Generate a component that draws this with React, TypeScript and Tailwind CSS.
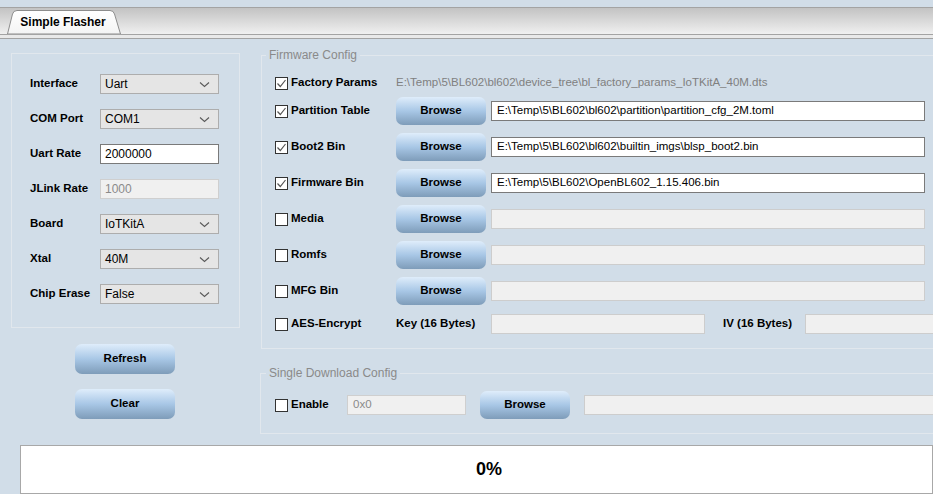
import React from 'react';

const font = { fontFamily: '"Liberation Sans", Arial, sans-serif' };

const Chevron = () => (
  <svg width="11" height="7" viewBox="0 0 11 7" className="shrink-0">
    <path d="M1 1.5l4.5 4 4.5-4" fill="none" stroke="#5a5a5a" strokeWidth="1.1" />
  </svg>
);

const Select: React.FC<{ value: string }> = ({ value }) => (
  <div className="w-[119px] h-[20px] bg-[#e5e5e5] border border-[#adadad] flex items-center justify-between pl-[4px] pr-[8px] text-[12px] text-black">
    <span>{value}</span>
    <Chevron />
  </div>
);

const Check: React.FC<{ checked?: boolean }> = ({ checked }) => (
  <div className="w-[13px] h-[13px] bg-white border border-[#333] flex items-center justify-center shrink-0">
    {checked && (
      <svg width="11" height="11" viewBox="0 0 11 11">
        <path d="M1.5 5.5l2.8 3 5.2-6.5" fill="none" stroke="#555" strokeWidth="1.2" />
      </svg>
    )}
  </div>
);

const GlossButton: React.FC<{ label: string; className: string }> = ({ label, className }) => (
  <div
    className={`rounded-[7px] bg-gradient-to-b from-[#dfedfb] via-[#a8c7e6] to-[#7e9cb9] flex items-center justify-center text-[11.5px] font-bold text-black shrink-0 ${className}`}
  >
    {label}
  </div>
);

const PathInput: React.FC<{ value?: string; className?: string }> = ({ value, className = 'w-[434px]' }) =>
  value ? (
    <div className={`h-[20px] bg-white border border-[#7a7a7a] flex items-center pl-[5px] text-[11.5px] text-black whitespace-nowrap overflow-hidden ${className}`}>
      {value}
    </div>
  ) : (
    <div className={`h-[20px] bg-[#f0f0f0] border border-[#cdcdcd] ${className}`} />
  );

const LeftRow: React.FC<{ label: string; children: React.ReactNode }> = ({ label, children }) => (
  <div className="flex items-center h-[20px]">
    <span className="w-[70px] text-[11.5px] font-bold text-black">{label}</span>
    {children}
  </div>
);

const FileRow: React.FC<{ label: string; checked?: boolean; value?: string; className?: string }> = ({
  label,
  checked,
  value,
  className = '',
}) => (
  <div className={`flex items-center h-[28px] ${className}`}>
    <div className="w-[121px] flex items-center gap-[3px]">
      <Check checked={checked} />
      <span className="text-[11.5px] font-bold text-black whitespace-nowrap">{label}</span>
    </div>
    <GlossButton label="Browse" className="w-[90px] h-[28px]" />
    <div className="w-[5px]" />
    <PathInput value={value} />
  </div>
);

export default function App() {
  return (
    <div className="w-[933px] h-[494px] overflow-hidden bg-[#d1dde8] flex flex-col" style={font}>
      {/* Tab strip */}
      <div className="h-[7px] shrink-0" />
      <div className="h-[27px] shrink-0 border-t border-[#a3a3a3] bg-gradient-to-b from-[#c3c3c3] to-[#f0f0f0] flex items-end pl-[7px]">
        <div className="relative w-[114px] h-[24px] flex items-center justify-center">
          <svg className="absolute inset-0" width="114" height="24" viewBox="0 0 114 24">
            <defs>
              <linearGradient id="tabg" x1="0" y1="0" x2="0" y2="1">
                <stop offset="0" stopColor="#ffffff" />
                <stop offset="1" stopColor="#f4f4f4" />
              </linearGradient>
            </defs>
            <path d="M0.5 24 L5.5 4 Q6.5 0.5 10 0.5 L103 0.5 Q106.5 0.5 107.5 4 L113.5 24 Z" fill="url(#tabg)" stroke="#8c8c8c" />
          </svg>
          <span className="relative text-[12px] font-bold text-black pr-[2px]">Simple Flasher</span>
        </div>
      </div>
      <div className="h-[3px] shrink-0 bg-[#e9e9e9] border-t border-[#a3a3a3] border-b border-b-[#a3a3a3] box-content" />

      {/* Main area */}
      <div className="flex shrink-0 h-[406px]">
        {/* Left column */}
        <div className="w-[250px] shrink-0 pl-[11px] pt-[14px] flex flex-col">
          <div className="w-[229px] h-[275px] border border-[#e1e7ed] pl-[18px] pt-[20px] flex flex-col gap-[15px]">
            <LeftRow label="Interface"><Select value="Uart" /></LeftRow>
            <LeftRow label="COM Port"><Select value="COM1" /></LeftRow>
            <LeftRow label="Uart Rate">
              <div className="w-[119px] h-[20px] bg-white border border-[#7a7a7a] flex items-center pl-[4px] text-[12px] text-black">2000000</div>
            </LeftRow>
            <LeftRow label="JLink Rate">
              <div className="w-[119px] h-[20px] bg-[#f0f0f0] border border-[#cfcfcf] flex items-center pl-[4px] text-[12px] text-[#8a8a8a]">1000</div>
            </LeftRow>
            <LeftRow label="Board"><Select value="IoTKitA" /></LeftRow>
            <LeftRow label="Xtal"><Select value="40M" /></LeftRow>
            <LeftRow label="Chip Erase"><Select value="False" /></LeftRow>
          </div>
          <div className="pl-[64px] pt-[16px] flex flex-col gap-[15px]">
            <GlossButton label="Refresh" className="w-[100px] h-[30px]" />
            <GlossButton label="Clear" className="w-[100px] h-[30px]" />
          </div>
        </div>

        {/* Right column */}
        <div className="flex flex-col pl-[11px]">
          <fieldset className="w-[690px] h-[303px] border border-[#e1e7ed] pl-[13px] pr-0 pt-0 mt-[7px] min-w-0">
            <legend className="ml-[-9px] px-[3px] text-[12px] text-[#8a8a8a]">Firmware Config</legend>
            <div className="flex items-center h-[20px] mt-[9px]">
              <div className="w-[121px] flex items-center gap-[3px]">
                <Check checked />
                <span className="text-[11.5px] font-bold text-black whitespace-nowrap">Factory Params</span>
              </div>
              <span className="text-[11.5px] text-[#808080] whitespace-nowrap">
                E:\Temp\5\BL602\bl602\device_tree\bl_factory_params_IoTKitA_40M.dts
              </span>
            </div>
            <FileRow label="Partition Table" checked value="E:\Temp\5\BL602\bl602\partition\partition_cfg_2M.toml" className="mt-[4px]" />
            <FileRow label="Boot2 Bin" checked value="E:\Temp\5\BL602\bl602\builtin_imgs\blsp_boot2.bin" className="mt-[8px]" />
            <FileRow label="Firmware Bin" checked value="E:\Temp\5\BL602\OpenBL602_1.15.406.bin" className="mt-[8px]" />
            <FileRow label="Media" className="mt-[8px]" />
            <FileRow label="Romfs" className="mt-[8px]" />
            <FileRow label="MFG Bin" className="mt-[8px]" />
            <div className="flex items-center h-[20px] mt-[9px]">
              <div className="w-[121px] flex items-center gap-[3px]">
                <Check />
                <span className="text-[11.5px] font-bold text-black whitespace-nowrap">AES-Encrypt</span>
              </div>
              <span className="w-[95px] text-[11.5px] font-bold text-black whitespace-nowrap">Key (16 Bytes)</span>
              <PathInput className="w-[214px]" />
              <span className="w-[100px] pl-[18px] text-[11.5px] font-bold text-black whitespace-nowrap">IV (16 Bytes)</span>
              <PathInput className="w-[140px]" />
            </div>
          </fieldset>

          <fieldset className="w-[690px] h-[70px] border border-[#e1e7ed] pl-[14px] pr-0 pt-0 mt-[15px] ml-[-1px] min-w-0">
            <legend className="ml-[-9px] px-[3px] text-[12px] text-[#8a8a8a]">Single Download Config</legend>
            <div className="flex items-center h-[28px] mt-[9px]">
              <div className="w-[72px] flex items-center gap-[3px]">
                <Check />
                <span className="text-[11.5px] font-bold text-black">Enable</span>
              </div>
              <div className="w-[119px] h-[20px] bg-[#f0f0f0] border border-[#cfcfcf] flex items-center pl-[5px] text-[11.5px] text-[#8a8a8a]">0x0</div>
              <div className="w-[14px]" />
              <GlossButton label="Browse" className="w-[90px] h-[28px]" />
              <div className="w-[14px]" />
              <PathInput className="w-[360px]" />
            </div>
          </fieldset>
        </div>
      </div>

      {/* Progress */}
      <div className="pl-[20px] flex-1 flex">
        <div className="w-[930px] h-[49px] bg-white border border-[#a8a8a8] flex items-center pl-[455px] text-[18px] font-bold text-black">
          0%
        </div>
      </div>
    </div>
  );
}
